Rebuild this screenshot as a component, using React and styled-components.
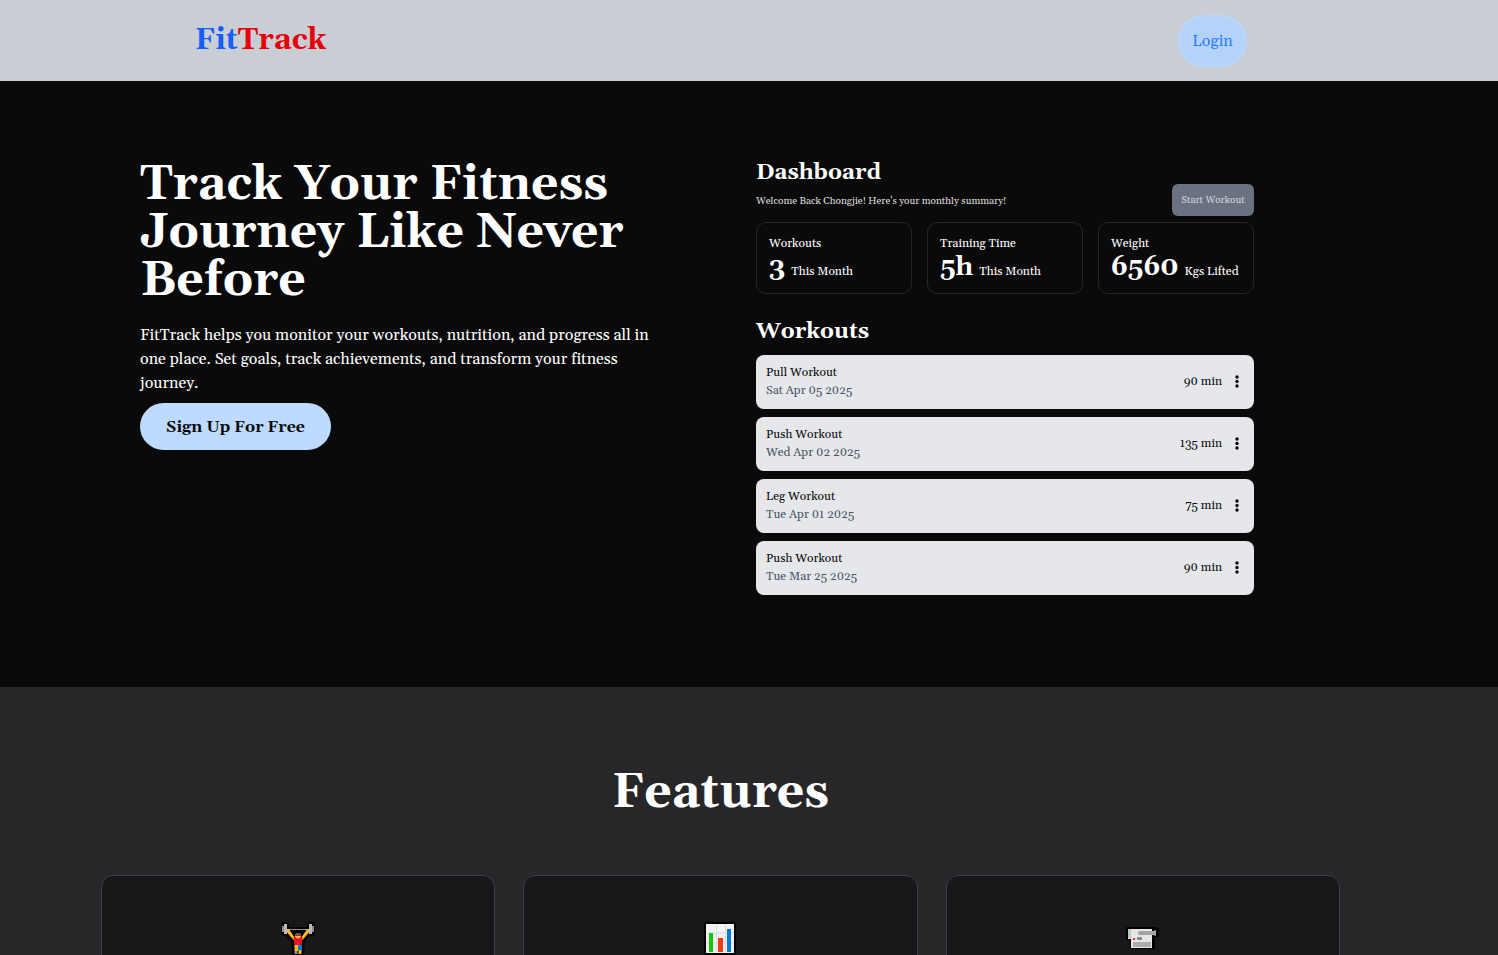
import React from "react";
import styled, { createGlobalStyle } from "styled-components";

const GlobalStyle = createGlobalStyle`
  *, *::before, *::after { box-sizing: border-box; }
  body {
    margin: 0;
    background: #27272a;
    color: #ffffff;
    font-family: Gelasio, Georgia, "Liberation Serif", serif;
    font-size: 16px;
    font-variant-ligatures: none;
    line-height: 24px;
  }
  h1, h2, h3, p, ul, dl, dd, dt { margin: 0; padding: 0; }
  button { font-family: inherit; cursor: pointer; }
`;

const Header = styled.header`
  display: flex;
  align-items: center;
  justify-content: space-between;
  height: 81px;
  padding: 0 251px 0 195px;
  background: #c9ced5;
`;

const Logo = styled.a`
  color: #e7000b;
  font-size: 30px;
  font-weight: 700;
  line-height: 36px;
  padding-bottom: 2px;
  text-decoration: none;
`;

const LogoStart = styled.span`
  color: #155dfc;
`;

const LoginButton = styled.button`
  height: 52px;
  width: 69px;
  padding: 0;
  border: 2px solid #b9d7fc;
  border-radius: 26px;
  background: #b5d3f8;
  color: #2b7fff;
  font-size: 16px;
  line-height: 24px;
`;

const Hero = styled.section`
  display: grid;
  grid-template-columns: minmax(0, 516fr) minmax(0, 498fr);
  column-gap: 100px;
  min-height: 606px;
  padding: 78px 244px 80px 140px;
  background: #0a0a0a;
`;

const HeroTitle = styled.h1`
  padding: 2px 0 18px;
  font-size: 48px;
  font-weight: 700;
  line-height: 48px;
`;

const HeroText = styled.p`
  margin-bottom: 8px;
`;

const SignUpButton = styled.button`
  height: 47px;
  width: 191px;
  padding: 0;
  border: 0;
  border-radius: 24px;
  background: #bedbff;
  color: #0a0a0a;
  font-size: 16px;
  font-weight: 700;
`;

const DashboardHead = styled.div`
  display: flex;
  align-items: flex-end;
  justify-content: space-between;
  height: 57px;
  margin-bottom: 6px;
`;

const PanelTitle = styled.h2`
  font-size: 22px;
  font-weight: 700;
  line-height: 28px;
`;

const Welcome = styled.p`
  padding: 6px 0 7px;
  color: #dddddd;
  font-size: 10px;
  line-height: 16px;
`;

const StartButton = styled.button`
  height: 32px;
  width: 82px;
  padding: 0;
  border: 0;
  border-radius: 6px;
  background: #6a7282;
  color: #d1d5dc;
  font-size: 10px;
`;

const Stats = styled.dl`
  display: grid;
  grid-template-columns: repeat(3, minmax(0, 1fr));
  gap: 15px;
  margin-bottom: 24px;
`;

const Stat = styled.div`
  height: 72px;
  padding: 13px 12px 0;
  border: 1px solid #262626;
  border-radius: 10px;
  font-size: 12px;
  line-height: 16px;
`;

const StatValue = styled.dd`
  display: flex;
  align-items: baseline;
  gap: 6px;
  white-space: nowrap;
`;

const StatNumber = styled.strong`
  font-size: 26px;
  line-height: 32px;
`;

const WorkoutList = styled.ul`
  display: grid;
  gap: 8px;
  margin-top: 9px;
  list-style: none;
`;

const Workout = styled.li`
  display: flex;
  align-items: center;
  height: 54px;
  padding: 0 12px 0 10px;
  border-radius: 8px;
  background: #e5e7eb;
  color: #0a0a0a;
  font-size: 12px;
  line-height: 18px;
`;

const WorkoutInfo = styled.div`
  flex: 1;
`;

const WorkoutName = styled.h3`
  font-size: 12px;
  font-weight: 400;
`;

const WorkoutDate = styled.p`
  color: #4a5565;
`;

const MenuButton = styled.button`
  display: flex;
  justify-content: center;
  width: 10px;
  margin-left: 10px;
  padding: 0;
  border: 0;
  background: transparent;
`;

const Features = styled.section`
  padding: 82px 158px 80px 101px;
  background: #27272a;
`;

const FeaturesTitle = styled.h2`
  margin-bottom: 58px;
  font-size: 48px;
  font-weight: 700;
  line-height: 48px;
  text-align: center;
`;

const FeatureGrid = styled.div`
  display: grid;
  grid-template-columns: repeat(3, minmax(0, 1fr));
  gap: 28px;
`;

const FeatureCard = styled.article`
  display: flex;
  justify-content: center;
  min-height: 260px;
  padding-top: 45px;
  border: 1px solid #3f3f46;
  border-radius: 12px;
  background: #18181b;
`;

const stats = [
  { label: "Workouts", value: "3", unit: "This Month" },
  { label: "Training Time", value: "5h", unit: "This Month" },
  { label: "Weight", value: "6560", unit: "Kgs Lifted" },
];

const workouts = [
  { name: "Pull Workout", date: "Sat Apr 05 2025", time: "90 min" },
  { name: "Push Workout", date: "Wed Apr 02 2025", time: "135 min" },
  { name: "Leg Workout", date: "Tue Apr 01 2025", time: "75 min" },
  { name: "Push Workout", date: "Tue Mar 25 2025", time: "90 min" },
];

function DotsIcon() {
  return (
    <svg width="4" height="14" viewBox="0 0 4 14" fill="#0a0a0a" aria-hidden="true">
      <circle cx="2" cy="2" r="1.7" />
      <circle cx="2" cy="6.500" r="1.7" />
      <circle cx="2" cy="11" r="1.7" />
    </svg>
  );
}

function LifterIcon() {
  return (
    <svg width="36" height="36" viewBox="0 0 36 36" aria-hidden="true">
      <path
        d="M3 3h4v5h22V3h4v10h-4l-6 7-1 15h-8l-1-15-6-7H3z"
        fill="none"
        stroke="#000"
        strokeWidth="3.5"
        strokeLinejoin="round"
      />
      <path d="M14 14h8v21h-8z" fill="#000" />
      <path d="M6 8.5h24" stroke="#8f8f96" strokeWidth="1" />
      <path d="M5.5 8l3.5 0 4.5 7 1.5 1h6l1.5-1 4.5-7 3.5 0-2 4-6 7h-9l-6-7z" fill="#ffb92e" />
      <path d="M10 9.5h16l-4.5 6h-7z" fill="#000" />
      <rect x="2" y="5" width="2" height="6" fill="#8a8a90" />
      <rect x="4" y="3" width="3" height="10" fill="#b8b8bc" />
      <rect x="29" y="3" width="3" height="10" fill="#b8b8bc" />
      <rect x="32" y="5" width="2" height="6" fill="#8a8a90" />
      <circle cx="18" cy="15" r="3" fill="#ffb92e" />
      <path d="M15 15q0-3 3-3t3 3z" fill="#7d4533" />
      <path d="M13.5 16h2q2.500 3 5 0h2l-1 9h-7z" fill="#e81224" />
      <path d="M14.500 24h3.500v6h-3.500z" fill="#ffb92e" />
      <path d="M18 24h4v5h-4z" fill="#0078d7" />
      <path d="M18.500 29h3v4h-3z" fill="#ffb92e" />
      <path d="M14.500 30h3v3h-3z" fill="#8a8a90" />
    </svg>
  );
}

function ChartIcon() {
  return (
    <svg width="36" height="36" viewBox="0 0 36 36" aria-hidden="true">
      <rect x="2" y="1" width="32" height="34" rx="1" fill="#000" />
      <rect x="4" y="3" width="28" height="29" fill="#f2f2f2" />
      <path d="M4 12h28M4 22h28M14.500 3v29M23.500 3v29" stroke="#dcdcdc" strokeWidth="1" />
      <rect x="7" y="12" width="4" height="19" fill="#16c60c" />
      <rect x="16" y="17" width="5" height="14" fill="#f03a17" />
      <rect x="25" y="8" width="4" height="23" fill="#0078d7" />
    </svg>
  );
}

function CameraIcon() {
  return (
    <svg width="36" height="36" viewBox="0 0 36 36" aria-hidden="true">
      <path d="M2 7h25l6 1v7h-4v12H6v-9H2z" fill="#000" stroke="#000" strokeWidth="2" strokeLinejoin="round" />
      <path d="M3 8h24v19H6v-9H3z" fill="#e6e6e6" />
      <path d="M3 8h3v9H3z" fill="#c4c4c4" />
      <path d="M14 10h14l3-1v6l-3-1H14q-2-2 0-4z" fill="#a3a3a3" />
      <rect x="8" y="17" width="2" height="2" fill="#f03a17" />
      <rect x="12" y="16" width="5" height="3" fill="#8a8a8a" />
      <rect x="8" y="21" width="18" height="5" fill="#ababab" />
    </svg>
  );
}

export default function App() {
  return (
    <>
      <GlobalStyle />
      <Header>
        <Logo href="#">
          <LogoStart>Fit</LogoStart>Track
        </Logo>
        <LoginButton type="button">Login</LoginButton>
      </Header>
      <main>
        <Hero>
          <div>
            <HeroTitle>Track Your Fitness Journey Like Never Before</HeroTitle>
            <HeroText>
              FitTrack helps you monitor your workouts, nutrition, and progress all in one place. Set goals, track
              achievements, and transform your fitness journey.
            </HeroText>
            <SignUpButton type="button">Sign Up For Free</SignUpButton>
          </div>
          <div>
            <DashboardHead>
              <div>
                <PanelTitle>Dashboard</PanelTitle>
                <Welcome>Welcome Back Chongjie! Here's your monthly summary!</Welcome>
              </div>
              <StartButton type="button">Start Workout</StartButton>
            </DashboardHead>
            <Stats>
              {stats.map((s) => (
                <Stat key={s.label}>
                  <dt>{s.label}</dt>
                  <StatValue>
                    <StatNumber>{s.value}</StatNumber>
                    <span>{s.unit}</span>
                  </StatValue>
                </Stat>
              ))}
            </Stats>
            <PanelTitle>Workouts</PanelTitle>
            <WorkoutList>
              {workouts.map((w) => (
                <Workout key={w.date}>
                  <WorkoutInfo>
                    <WorkoutName>{w.name}</WorkoutName>
                    <WorkoutDate>{w.date}</WorkoutDate>
                  </WorkoutInfo>
                  <span>{w.time}</span>
                  <MenuButton type="button" aria-label="Workout options">
                    <DotsIcon />
                  </MenuButton>
                </Workout>
              ))}
            </WorkoutList>
          </div>
        </Hero>
        <Features>
          <FeaturesTitle>Features</FeaturesTitle>
          <FeatureGrid>
            <FeatureCard>
              <LifterIcon />
            </FeatureCard>
            <FeatureCard>
              <ChartIcon />
            </FeatureCard>
            <FeatureCard>
              <CameraIcon />
            </FeatureCard>
          </FeatureGrid>
        </Features>
      </main>
    </>
  );
}
